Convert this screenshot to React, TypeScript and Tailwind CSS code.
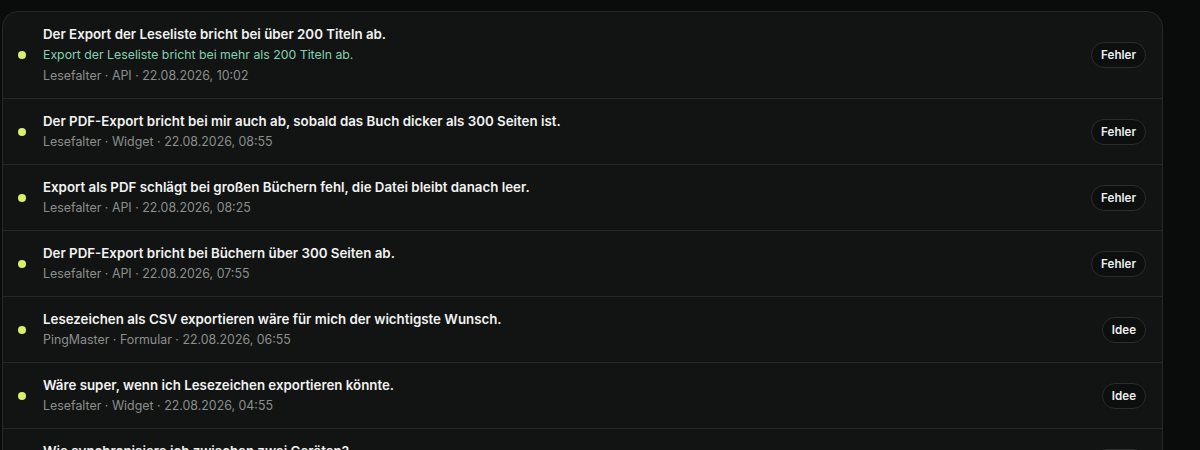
import React from 'react'

type Item = {
  title: string
  summary?: string
  author: string
  source: string
  date: string
  tag: string
}

const items: Item[] = [
  {
    title: 'Der Export der Leseliste bricht bei über 200 Titeln ab.',
    summary: 'Export der Leseliste bricht bei mehr als 200 Titeln ab.',
    author: 'Lesefalter',
    source: 'API',
    date: '22.08.2026, 10:02',
    tag: 'Fehler',
  },
  {
    title: 'Der PDF-Export bricht bei mir auch ab, sobald das Buch dicker als 300 Seiten ist.',
    author: 'Lesefalter',
    source: 'Widget',
    date: '22.08.2026, 08:55',
    tag: 'Fehler',
  },
  {
    title: 'Export als PDF schlägt bei großen Büchern fehl, die Datei bleibt danach leer.',
    author: 'Lesefalter',
    source: 'API',
    date: '22.08.2026, 08:25',
    tag: 'Fehler',
  },
  {
    title: 'Der PDF-Export bricht bei Büchern über 300 Seiten ab.',
    author: 'Lesefalter',
    source: 'API',
    date: '22.08.2026, 07:55',
    tag: 'Fehler',
  },
  {
    title: 'Lesezeichen als CSV exportieren wäre für mich der wichtigste Wunsch.',
    author: 'PingMaster',
    source: 'Formular',
    date: '22.08.2026, 06:55',
    tag: 'Idee',
  },
  {
    title: 'Wäre super, wenn ich Lesezeichen exportieren könnte.',
    author: 'Lesefalter',
    source: 'Widget',
    date: '22.08.2026, 04:55',
    tag: 'Idee',
  },
  {
    title: 'Wie synchronisiere ich zwischen zwei Geräten?',
    author: 'Lesefalter',
    source: 'App',
    date: '22.08.2026, 03:40',
    tag: 'Frage',
  },
]

const Row = ({ item }: { item: Item }) => (
  <div className="flex items-center border-b border-[#252827] pl-[15px] pr-4 py-3">
    <span className="h-[8px] w-[8px] shrink-0 rounded-full bg-[#d6f06c]" />
    <div className="ml-[17px] flex min-w-0 flex-1 flex-col gap-[1px]">
      <p className="text-[13.3px] font-semibold leading-[20px] text-[#f1f2f1]">{item.title}</p>
      {item.summary && (
        <p className="text-[12.3px] leading-[20px] text-[#86d0b4]">{item.summary}</p>
      )}
      <p className="text-[12.4px] leading-[20px] text-[#8b8f8d]">
        {item.author} · {item.source} · {item.date}
      </p>
    </div>
    <span className="shrink-0 rounded-full border border-[#2a2d2c] bg-[#0d0f0e] px-[9px] py-[4px] text-[11.6px] font-semibold leading-[16px] text-[#eef0ee]">
      {item.tag}
    </span>
  </div>
)

export default function App() {
  return (
    <div className="h-[450px] w-[1200px] overflow-hidden bg-[#0a0b0b] pl-[2px] pt-[11px] font-['Inter',sans-serif]">
      <div className="w-[1161px] overflow-hidden rounded-t-[16px] border border-[#252827] bg-[#121413]">
        {items.map((item, i) => (
          <Row key={i} item={item} />
        ))}
      </div>
    </div>
  )
}
